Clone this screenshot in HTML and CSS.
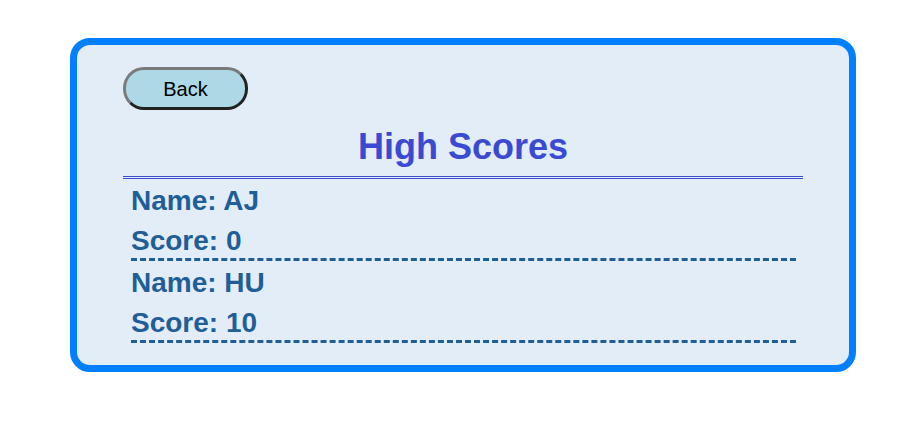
FILE: index.html
```html
<!DOCTYPE html>
<html>
<head>
<meta charset="utf-8">
<link rel="stylesheet" href="styles.css">
</head>
<body>
<div class="card">
  <button class="back">Back</button>
  <h1 class="title">High Scores</h1>
  <div class="list">
    <div class="entry">
      <p class="line">Name: AJ</p>
      <p class="line">Score: 0</p>
    </div>
    <div class="entry">
      <p class="line">Name: HU</p>
      <p class="line">Score: 10</p>
    </div>
  </div>
</div>
</body>
</html>
```

FILE: styles.css
```css
html, body {
  margin: 0;
  padding: 0;
  background: #ffffff;
  font-family: "Liberation Sans", Arial, sans-serif;
}
.card {
  box-sizing: border-box;
  width: 786px;
  margin: 38px 0 0 70px;
  border: 7px solid #0080ff;
  border-radius: 20px;
  background: #e3edf8;
  padding: 22px 46px 22px 46px;
  display: flex;
  flex-direction: column;
}
.back {
  align-self: flex-start;
  box-sizing: border-box;
  width: 125px;
  height: 43px;
  border: 3px solid;
  border-color: #7a7a7a #222222 #222222 #7a7a7a;
  border-radius: 21px;
  background: #add8e6;
  color: #000;
  font-family: "Liberation Sans", Arial, sans-serif;
  font-size: 20px;
  padding: 2px 0 0 0;
  margin: 0;
}
.title {
  margin: 16px 0 0 0;
  padding-bottom: 9px;
  font-size: 36px;
  line-height: 41px;
  font-weight: bold;
  text-align: center;
  color: #3b4ad2;
  border-bottom: 3px double #3b4ad2;
}
.list {
  margin: 0 7px 0 8px;
}
.entry {
  padding-top: 5px;
  border-bottom: 3px dashed #1f5e97;
  display: flex;
  flex-direction: column;
  gap: 6px;
}
.line {
  margin: 0;
  font-size: 28px;
  line-height: 34px;
  font-weight: bold;
  color: #1f5e97;
}
```
